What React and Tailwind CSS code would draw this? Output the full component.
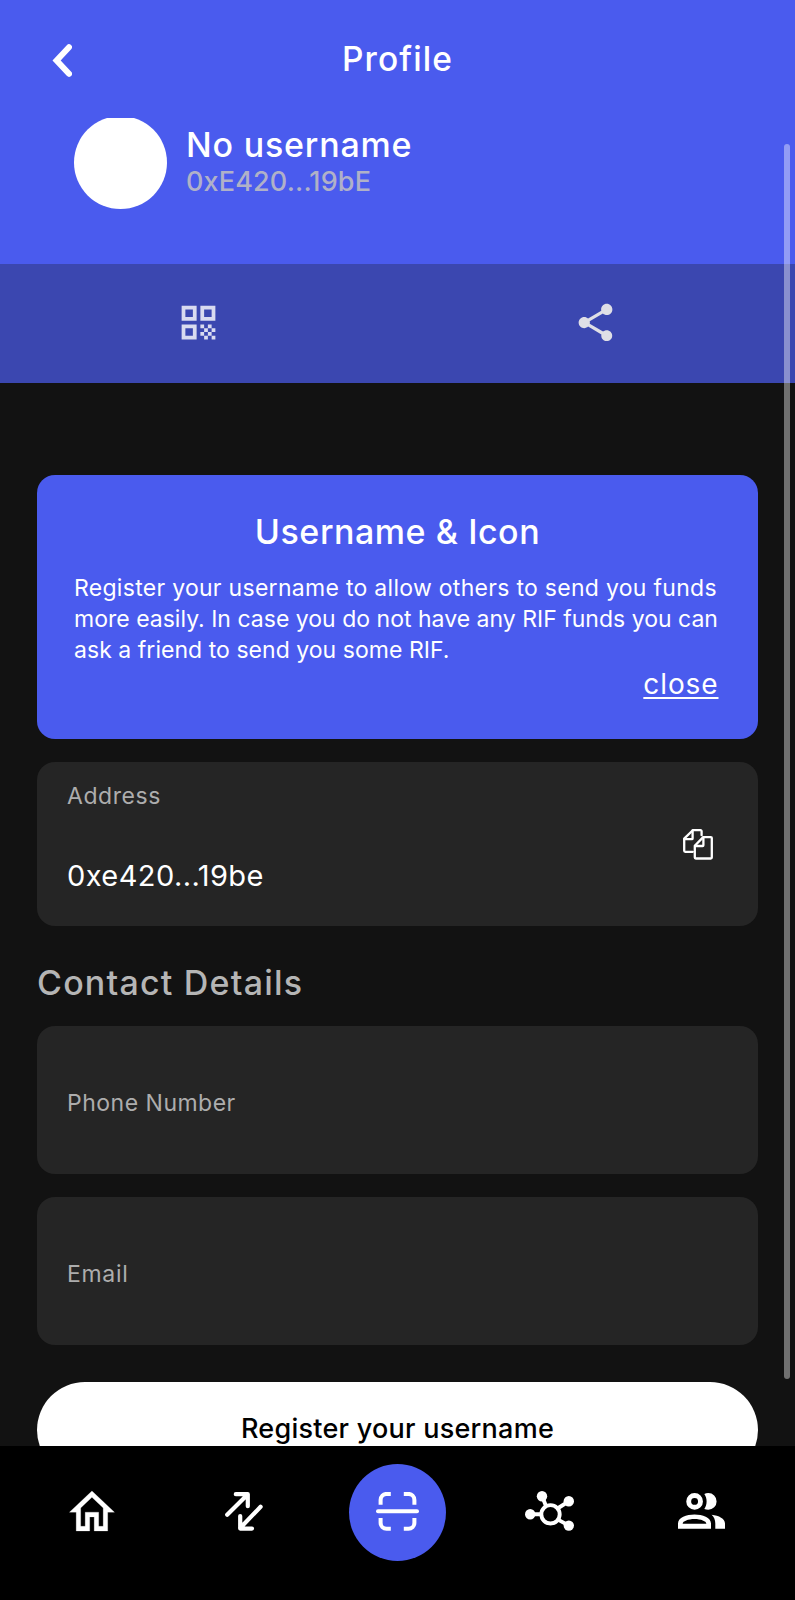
import { MdQrCode, MdShare } from "react-icons/md";

function BackIcon() {
  return (
    <svg width="20" height="33" viewBox="0 0 20 33" fill="none">
      <path d="M17 3.2 4.6 16.5 17 29.8" stroke="white" strokeWidth="6" strokeLinecap="round" strokeLinejoin="miter" />
    </svg>
  );
}

function CopyIcon() {
  return (
    <svg width="30" height="31" viewBox="0 0 30 31" fill="none" stroke="white" strokeWidth="2.3" strokeLinejoin="round" strokeLinecap="round">
      <path d="M18.6 6.2V2.2a1 1 0 0 0-1-1H9.8L1.2 9.6v12.2a1 1 0 0 0 1 1h7.6" />
      <path d="M9.6 1.4v8a.8.8 0 0 1-.8.8h-7.4" />
      <path d="M20.2 8.1h7.6a1 1 0 0 1 1 1v19.4a1 1 0 0 1-1 1h-15a1 1 0 0 1-1-1V16.8z" />
      <path d="M20.4 8.4v7.8a.8.8 0 0 1-.8.8h-7.5" />
    </svg>
  );
}

function HomeIcon() {
  return (
    <svg width="45" height="40" viewBox="1.8 3 20 17" preserveAspectRatio="none" fill="white" className="overflow-visible">
      <path
        d="M12 5.69l5 4.5V18h-2v-6H9v6H7v-7.81l5-4.5M12 3L2 12h3v8h6v-6h2v6h6v-8h3L12 3z"
        stroke="white"
        strokeWidth="0.1"
      />
    </svg>
  );
}

function SwapIcon() {
  return (
    <svg width="38" height="39" viewBox="0 0 38 39" fill="none" stroke="white" strokeWidth="4.2" strokeLinecap="round" strokeLinejoin="round">
      <path d="M2.2 22.8 22.6 2.4M10.8 2.2h12v12" />
      <path d="M35.6 14.8 15.2 36M15.2 24v12.6h11.8" />
    </svg>
  );
}

function ScanIcon() {
  return (
    <svg width="43" height="39" viewBox="0 0 43 39" fill="none" stroke="white" strokeWidth="4">
      <path d="M2 19.3h39" strokeLinecap="round" />
      <path d="M4.6 12.7V7.9a6 6 0 0 1 6-6h4.2M27.8 1.9h4.6a6 6 0 0 1 6 6v4.8M38.4 26v4.8a6 6 0 0 1-6 6h-4.6M14.8 36.8h-4.2a6 6 0 0 1-6-6V26" />
    </svg>
  );
}

function NetworkIcon() {
  return (
    <svg width="49" height="40" viewBox="0 0 49 40" fill="none" stroke="white" strokeWidth="3.9">
      <circle cx="25.5" cy="23.3" r="9.2" />
      <path d="M5 23.3h11M17 5l4 10M44 10.2 32.5 17.5M44 34.6l-11-6" />
      <g fill="white" stroke="none">
        <circle cx="5.2" cy="23.3" r="5.2" />
        <circle cx="17" cy="5.2" r="5.2" />
        <circle cx="43.8" cy="10.2" r="5.2" />
        <circle cx="43.8" cy="34.6" r="5.2" />
      </g>
    </svg>
  );
}

function PeopleIcon() {
  return (
    <svg width="47" height="36" viewBox="0 0 47 36" fill="white">
      <circle cx="16.6" cy="8.4" r="5.9" fill="none" stroke="white" strokeWidth="4.9" />
      <path d="M26.3 0.9C27.4 0.4 28.8 0.1 30.3 0.1a8.3 8.3 0 0 1 0 16.6c-1.5 0-2.9-.3-4-.8C29.4 11.5 29.4 5.3 26.3 0.9z" />
      <path fillRule="evenodd" d="M0 35.7V30.5c0-6 8.5-9 16.5-9s16.5 3 16.5 9v5.2zM4.7 30.8h23.6v-.4c0-2-5.4-4.4-11.8-4.4s-11.8 2.4-11.8 4.4z" />
      <path d="M33.6 21.8C41 22.6 47 25.8 47 30.5v5.2h-9.7v-5.2c0-3.6-1.3-6.5-3.7-8.7z" />
    </svg>
  );
}

const tabs = [
  { name: "home", Icon: HomeIcon },
  { name: "swap", Icon: SwapIcon },
  { name: "scan", Icon: ScanIcon, active: true },
  { name: "network", Icon: NetworkIcon },
  { name: "contacts", Icon: PeopleIcon },
];

function BottomNav() {
  return (
    <nav className="flex h-[154px] shrink-0 items-start bg-black px-4 pt-[18px]">
      {tabs.map(({ name, Icon, active }) => (
        <button key={name} aria-label={name} className="flex h-[97px] flex-1 items-center justify-center">
          {active ? (
            <span className="flex size-[97px] items-center justify-center rounded-full bg-[#4a5bee] pb-[3px]">
              <Icon />
            </span>
          ) : (
            <span className="pr-[2px] pb-[3px]">
              <Icon />
            </span>
          )}
        </button>
      ))}
    </nav>
  );
}

export default function App() {
  return (
    <div className="relative flex h-[1600px] w-[795px] flex-col overflow-hidden bg-[#121212] font-['Inter',sans-serif] text-white">
      <header className="h-[264px] shrink-0 bg-[#4a5bee] pt-[38px]">
        <div className="grid h-10 grid-cols-3 items-center">
          <button aria-label="Back" className="mt-[2px] ml-[52px] w-fit">
            <BackIcon />
          </button>
          <h1 className="pt-px text-center text-[33.5px] leading-[41px] font-medium tracking-[1.1px]">Profile</h1>
        </div>
        <div className="mt-10 flex pl-[74px]">
          <div className="h-[91px] w-[93px] overflow-hidden">
            <div className="-mt-[2.5px] size-[93px] rounded-full bg-white" />
          </div>
          <div className="ml-[19px] pt-[7px]">
            <p className="text-[34px] leading-10 font-medium tracking-[0.8px]">No username</p>
            <p className="text-[27px] leading-[34px] font-medium tracking-[0.15px] text-[#b0b1c8]">0xE420...19bE</p>
          </div>
        </div>
      </header>

      <div className="grid h-[119px] shrink-0 grid-cols-2 place-items-center bg-[#3b47b0] pb-[2px]">
        <MdQrCode className="mr-px size-[45px] text-[#d9dbf0]" />
        <MdShare className="mr-px size-[45px] text-[#dfdfe6]" />
      </div>

      <main className="h-[1063px] shrink-0 overflow-hidden px-[37px] pt-[92px]">
        <section className="h-[264px] rounded-[18px] bg-[#4a5bee] px-9 pt-[35px]">
          <h2 className="text-center text-[34px] leading-[44px] font-medium tracking-[0.55px]">Username &amp; Icon</h2>
          <p className="mt-[19px] pl-px text-[23px] leading-[31.2px] whitespace-nowrap">
            <span className="block tracking-[0.29px]">Register your username to allow others to send you funds</span>
            <span className="block tracking-[0.01px]">more easily. In case you do not have any RIF funds you can</span>
            <span className="block tracking-[0.04px]">ask a friend to send you some RIF.</span>
          </p>
          <div className="-mt-px flex justify-end pr-[3.5px]">
            <button className="text-[28px] leading-9 tracking-[0.9px] underline decoration-2 underline-offset-[3px]">close</button>
          </div>
        </section>

        <section className="mt-[23px] flex h-[164px] items-center justify-between rounded-[18px] bg-[#252525] pr-[45px] pl-[30px]">
          <div className="h-full pt-[20px]">
            <p className="text-[23px] leading-7 tracking-[0.55px] text-[#adadad]">Address</p>
            <p className="mt-[48px] text-[29px] leading-9 tracking-[0.42px]">0xe420...19be</p>
          </div>
          <button aria-label="Copy address">
            <CopyIcon />
          </button>
        </section>

        <h2 className="mt-[35px] text-[34px] leading-[44px] font-medium tracking-[1.2px] text-[#b5b5b5]">Contact Details</h2>

        <div className="mt-[21px] h-[148px] rounded-[18px] bg-[#252525] pt-[63px] pl-[30px] text-[23px] leading-7 tracking-[0.5px] text-[#adadad]">
          Phone Number
        </div>
        <div className="mt-[23px] h-[148px] rounded-[18px] bg-[#252525] pt-[63px] pl-[30px] text-[23px] leading-7 tracking-[0.7px] text-[#adadad]">
          Email
        </div>

        <button className="mt-[37px] flex h-24 w-full justify-center rounded-full bg-white pt-[30px] text-[27px] leading-[34px] font-medium tracking-[0.25px] text-black">
          Register your username
        </button>
      </main>

      <BottomNav />

      {/* scroll indicator */}
      <div className="absolute top-[144px] right-[5px] h-[1235px] w-[6px] rounded-full bg-white/40" />
    </div>
  );
}
